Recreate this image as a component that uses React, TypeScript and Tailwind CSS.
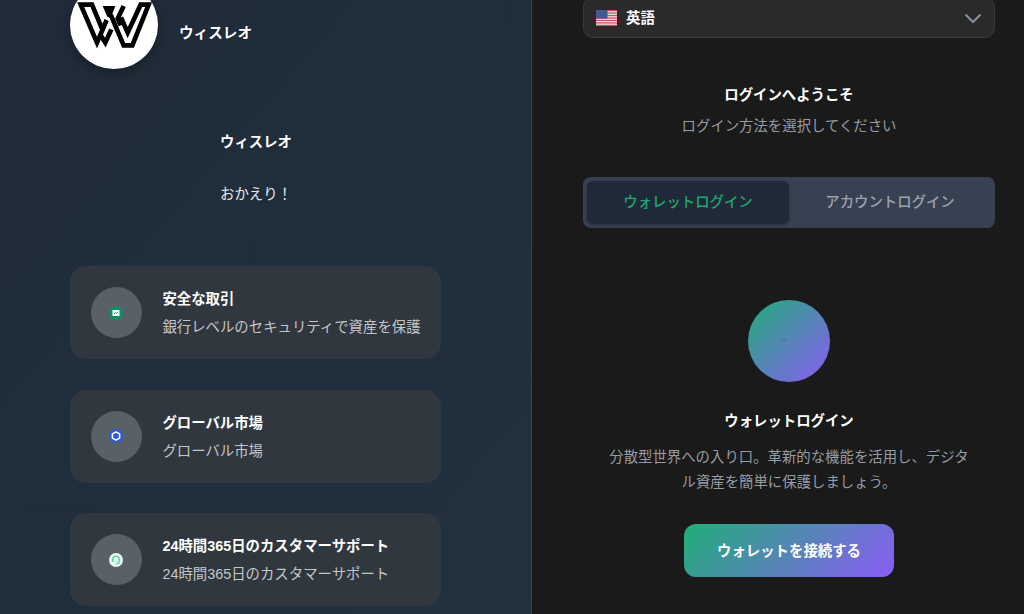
import React from 'react';

const FONT = 'font-["Liberation_Sans","Noto_Sans_CJK_JP",sans-serif]';

function SecureIcon() {
  return (
    <svg viewBox="0 0 14 14" className="-ml-px size-[14px]">
      <circle cx="7" cy="7" r="7" fill="#0f8f62" />
      <rect x="3.5" y="4" width="7" height="6" rx="0.5" fill="#fff" />
      <path d="M5 8 L6.5 6.7 L7.5 7.3 L9.2 5.7" stroke="#0f8f62" strokeWidth="0.9" fill="none" />
    </svg>
  );
}

function MarketIcon() {
  return (
    <svg viewBox="0 0 14 14" className="-ml-px size-[14px]">
      <circle cx="7" cy="7" r="7" fill="#2f5bdb" />
      <path d="M7 2.8 L10.6 4.9 V9.1 L7 11.2 L3.4 9.1 V4.9 Z" stroke="#fff" strokeWidth="1.5" fill="none" />
    </svg>
  );
}

function SupportIcon() {
  return (
    <svg viewBox="0 0 14 14" className="-ml-px size-[14px]">
      <circle cx="7" cy="7" r="7" fill="#e9faf4" />
      <path d="M3.8 9 V6.4 A3.2 3.2 0 0 1 10.2 6.4 V9 Q9.6 10.8 7.2 10.8" stroke="#5fcfab" strokeWidth="1.5" fill="none" />
      <path d="M5.5 7.8 Q7 9.4 8.5 7.8" stroke="#8adfc3" strokeWidth="0.8" fill="none" />
    </svg>
  );
}

function Logo() {
  return (
    <div className="size-[88px] shrink-0 overflow-hidden rounded-full bg-white shadow-[0_4px_12px_rgba(0,0,0,0.3)]">
      <svg viewBox="12 -57 264 264" className="size-full">
        <g fill="none" stroke="#000" strokeWidth="14">
          <path d="M108 86 L78 14 H44 L93 128 L122 60" />
          <path d="M104 106 L118 128 L136 88" />
          <path d="M134 44 L173 136 H199 L248 14 H224 L185 98 L165 52" />
          <path d="M173 18 L155 56 L164 76" />
        </g>
        <path d="M110 18 H148 L134 54 L124 50 Z" fill="#000" />
      </svg>
    </div>
  );
}

function FlagIcon() {
  return (
    <svg viewBox="0 0 21 16" className="h-4 w-[21px]">
      <rect width="21" height="16" fill="#e9e5e8" />
      {[0, 2.46, 4.92, 7.38, 9.84, 12.3, 14.76].map((y) => (
        <rect key={y} y={y} width="21" height="1.24" fill="#c9505c" />
      ))}
      <rect width="11.5" height="8.6" fill="#44598c" />
    </svg>
  );
}

const features = [
  { title: '安全な取引', description: '銀行レベルのセキュリティで資産を保護', icon: <SecureIcon /> },
  { title: 'グローバル市場', description: 'グローバル市場', icon: <MarketIcon /> },
  { title: '24時間365日のカスタマーサポート', description: '24時間365日のカスタマーサポート', icon: <SupportIcon /> },
];

function BrandPanel() {
  return (
    <section className="flex h-full w-[532px] shrink-0 flex-col border-r border-[#3a424b] bg-linear-to-br from-[#202b39] via-[#202e3c] to-[#23303e] pl-[70px]">
      <div className="-mt-[19px] flex items-center gap-[21px]">
        <Logo />
        <span className="mt-[17px] text-[14.6px] font-bold text-shadow-sm">ウィスレオ</span>
      </div>
      <div className="mt-[62px] w-[371px] pl-[150px]">
        <h1 className="font-bold leading-[22px] text-shadow-sm">ウィスレオ</h1>
        <p className="mt-[30px] leading-[22px] text-[#e4e7e9]">おかえり！</p>
      </div>
      <div className="mt-[61.4px] flex flex-col gap-[30.8px]">
        {features.map((feature) => (
          <div
            key={feature.title}
            className="flex h-[92.7px] w-[371px] shrink-0 items-center gap-5 rounded-2xl bg-[#30373f] pl-[21px]"
          >
            <div className="flex size-[51.4px] shrink-0 items-center justify-center rounded-full bg-[#596067]">
              {feature.icon}
            </div>
            <div className="whitespace-nowrap pt-px">
              <h3 className="font-bold leading-[22px]">{feature.title}</h3>
              <p className="mt-[6px] leading-[22px] text-[#c3c6c9]">{feature.description}</p>
            </div>
          </div>
        ))}
      </div>
    </section>
  );
}

function LoginPanel() {
  return (
    <section className="flex h-full flex-1 flex-col items-center bg-[#1a1a1a] pl-[51px] pr-[29px]">
      <button className="-mt-[3px] flex h-[41px] w-full shrink-0 items-center rounded-[10px] border border-[#3a3a3a] bg-[#2a2a2a] px-3 pt-px font-bold">
        <FlagIcon />
        <span className="ml-[9px] pt-px">英語</span>
        <svg viewBox="0 0 18 11" className="ml-auto h-[11px] w-[18px]">
          <path d="M1.5 1.5 L9 9 L16.5 1.5" stroke="#8790a2" strokeWidth="2" fill="none" />
        </svg>
      </button>

      <h2 className="mt-[46px] font-bold leading-[22px]">ログインへようこそ</h2>
      <p className="mt-[9px] leading-[22px] text-[#969ca6]">ログイン方法を選択してください</p>

      <div className="mt-[40px] flex h-[51px] w-full shrink-0 rounded-lg bg-[#374151] p-1 font-medium">
        <button className="w-[202px] rounded-md bg-[#1f2937] text-[#1da672] shadow-[0_1px_3px_rgba(0,0,0,0.3)]">
          ウォレットログイン
        </button>
        <button className="flex-1 text-[#9ca3af]">アカウントログイン</button>
      </div>

      <div className="mt-[71.5px] flex size-[82px] shrink-0 items-center justify-center rounded-full bg-[linear-gradient(135deg,#1fae76,#8b5cf6)]">
        <span className="mr-[10px] h-px w-[4px] bg-[#75605c]" />
      </div>

      <h3 className="mt-[28.5px] font-bold leading-[22px]">ウォレットログイン</h3>
      <p className="mt-[13px] w-[360.5px] text-center leading-[25px] text-[#969ca6]">
        分散型世界への入り口。革新的な機能を活用し、デジタル資産を簡単に保護しましょう。
      </p>
      <button className="mt-[29.4px] h-[53px] w-[210px] shrink-0 rounded-xl bg-[linear-gradient(135deg,#1fae76,#8b5cf6)] pt-px font-bold">
        ウォレットを接続する
      </button>
    </section>
  );
}

export default function App() {
  return (
    <main lang="ja" className={`flex h-screen w-screen overflow-hidden text-[14.4px] text-white ${FONT}`}>
      <BrandPanel />
      <LoginPanel />
    </main>
  );
}
